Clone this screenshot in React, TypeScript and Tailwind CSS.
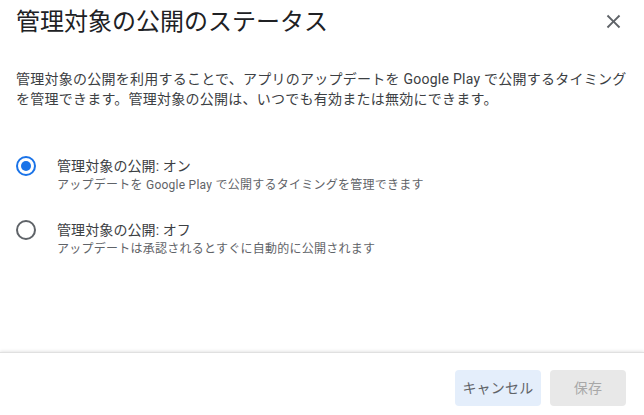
import React, { useState } from 'react';

const font = { fontFamily: 'Roboto, "Noto Sans CJK JP", sans-serif' };

const options = [
  {
    id: 'on',
    label: '管理対象の公開: オン',
    desc: 'アップデートを Google Play で公開するタイミングを管理できます',
  },
  {
    id: 'off',
    label: '管理対象の公開: オフ',
    desc: 'アップデートは承認されるとすぐに自動的に公開されます',
  },
];

const App: React.FC = () => {
  const [selected, setSelected] = useState('on');

  return (
    <div className="flex h-[415px] w-[644px] flex-col bg-white" style={font}>
      {/* Header */}
      <div className="flex h-[43px] items-center justify-between pl-4 pr-[19px]">
        <h1 className="text-[24px] leading-[30px] text-[#202124]">管理対象の公開のステータス</h1>
        <button className="flex h-6 w-6 items-center justify-center text-[#5f6368]">
          <svg width="23" height="23" viewBox="0 0 24 24" fill="currentColor">
            <path d="M19 6.41 17.59 5 12 10.59 6.41 5 5 6.41 10.59 12 5 17.59 6.41 19 12 13.41 17.59 19 19 17.59 13.41 12z" />
          </svg>
        </button>
      </div>

      {/* Body */}
      <div className="flex-1 px-4">
        <p className="mt-[26px] text-[14px] leading-[20px] tracking-[0.25px] text-[#3c4043]">
          管理対象の公開を利用することで、アプリのアップデートを Google Play で公開するタイミングを管理できます。管理対象の公開は、いつでも有効または無効にできます。
        </p>

        <div className="mt-[47px] flex flex-col gap-[26px]">
          {options.map((opt) => {
            const checked = selected === opt.id;
            return (
              <label key={opt.id} className="flex cursor-pointer items-start" onClick={() => setSelected(opt.id)}>
                <span
                  className={`flex h-5 w-5 shrink-0 items-center justify-center rounded-full border-2 ${
                    checked ? 'border-[#1a73e8]' : 'border-[#5f6368]'
                  }`}
                >
                  {checked && <span className="h-[10px] w-[10px] rounded-full bg-[#1a73e8]" />}
                </span>
                <span className="ml-[21px] flex flex-col">
                  <span className="text-[14px] leading-[20px] tracking-[0.1px] text-[#3c4043]">{opt.label}</span>
                  <span className="text-[12px] leading-[18px] tracking-[0.25px] text-[#5f6368]">{opt.desc}</span>
                </span>
              </label>
            );
          })}
        </div>
      </div>

      {/* Footer */}
      <div className="flex h-[63px] items-start justify-end gap-[9px] border-t border-[#e0e0e0] pr-[18px] pt-[17px] shadow-[0_-1px_3px_rgba(0,0,0,0.1)]">
        <button className="h-9 w-[86px] rounded bg-[#e4eefb] text-[14px] tracking-[0.25px] text-[#5f6368]">キャンセル</button>
        <button className="h-9 w-[76px] rounded bg-[#e8e8e8] text-[14px] tracking-[0.25px] text-[#a8a8a8]" disabled>
          保存
        </button>
      </div>
    </div>
  );
};

export default App;
